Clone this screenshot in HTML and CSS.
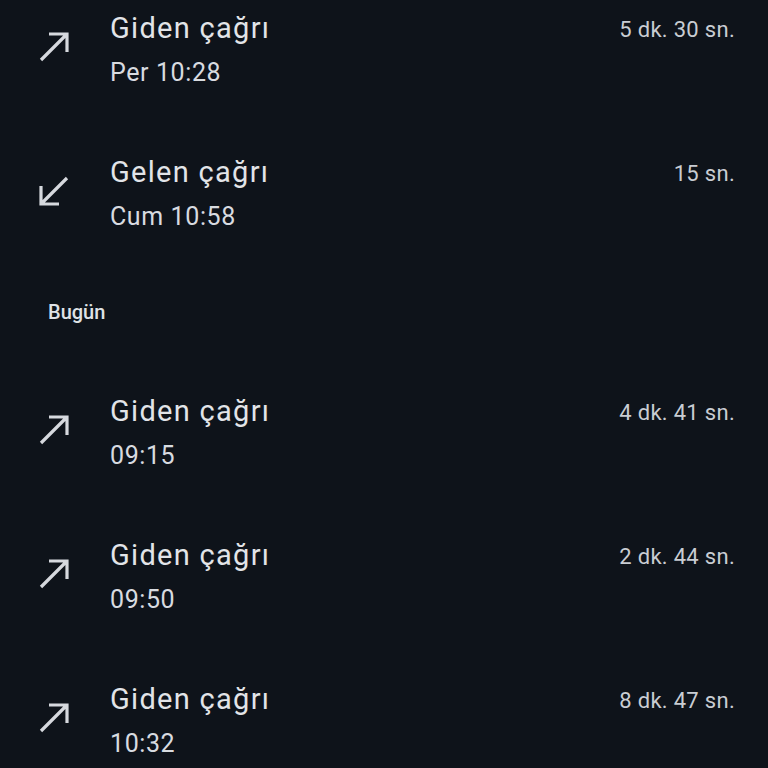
FILE: index.html
```html
<!DOCTYPE html>
<html lang="tr">
<head>
  <meta charset="UTF-8" />
  <title>Arama geçmişi</title>
  <link rel="stylesheet" href="styles.css">
</head>
<body>

  <div class="call-list">
    <div class="call">
      <svg class="dir" viewBox="0 0 30 30"><path d="M2 28 L28 2 M10 2 H28 V20" /></svg>
      <div class="info">
        <div class="title">Giden çağrı</div>
        <div class="when">Per 10:28</div>
      </div>
      <div class="dur">5 dk. 30 sn.</div>
    </div>

    <div class="call">
      <svg class="dir" viewBox="0 0 30 30"><path d="M28 2 L2 28 M2 10 V28 H20" /></svg>
      <div class="info">
        <div class="title">Gelen çağrı</div>
        <div class="when">Cum 10:58</div>
      </div>
      <div class="dur">15 sn.</div>
    </div>

    <div class="day">Bugün</div>

    <div class="call">
      <svg class="dir" viewBox="0 0 30 30"><path d="M2 28 L28 2 M10 2 H28 V20" /></svg>
      <div class="info">
        <div class="title">Giden çağrı</div>
        <div class="when">09:15</div>
      </div>
      <div class="dur">4 dk. 41 sn.</div>
    </div>

    <div class="call">
      <svg class="dir" viewBox="0 0 30 30"><path d="M2 28 L28 2 M10 2 H28 V20" /></svg>
      <div class="info">
        <div class="title">Giden çağrı</div>
        <div class="when">09:50</div>
      </div>
      <div class="dur">2 dk. 44 sn.</div>
    </div>

    <div class="call">
      <svg class="dir" viewBox="0 0 30 30"><path d="M2 28 L28 2 M10 2 H28 V20" /></svg>
      <div class="info">
        <div class="title">Giden çağrı</div>
        <div class="when">10:32</div>
      </div>
      <div class="dur">8 dk. 47 sn.</div>
    </div>
  </div>

</body>
</html>
```

FILE: styles.css
```css
html,
body {
  margin: 0;
  background: #0e131a;
  color: #e2e4e8;
  font-family: Roboto, "Noto Sans", sans-serif;
  overflow: hidden;
}

.call-list {
  margin-top: -22px;
}

.call {
  display: flex;
  align-items: flex-start;
  height: 144px;
  box-sizing: border-box;
  padding: 28px 33px 0 39px;
}

.dir {
  width: 30px;
  height: 30px;
  margin-top: 26px;
  flex: none;
  fill: none;
  stroke: #d6d9de;
  stroke-width: 3.2;
}

.info {
  flex: 1;
  margin-left: 41px;
}

.title {
  font-size: 29px;
  line-height: 44px;
  letter-spacing: 1.3px;
}

.when {
  font-size: 25px;
  line-height: 44px;
  padding-top: 1px;
  letter-spacing: 0.6px;
  color: #d8dbe0;
}

.dur {
  font-size: 22px;
  line-height: 44px;
  padding-top: 2px;
  color: #c9cdd3;
  letter-spacing: 0.3px;
}

.day {
  height: 95px;
  box-sizing: border-box;
  padding: 36px 0 0 48px;
  font-size: 20px;
  line-height: 20px;
  font-weight: 500;
  color: #dfe2e6;
}
```
